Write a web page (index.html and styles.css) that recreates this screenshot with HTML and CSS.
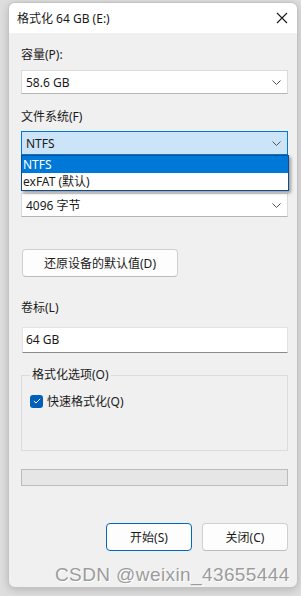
FILE: index.html
```html
<!DOCTYPE html>
<html lang="zh-CN">
<head>
    <meta charset="UTF-8">
    <title>格式化 64 GB (E:)</title>
    <link rel="stylesheet" href="styles.css">
</head>
<body>
    <div class="window">
        <div class="titlebar">
            <span class="title">格式化 64 GB (E:)</span>
            <svg class="close" width="12" height="12" viewBox="0 0 12 12"><path d="M1 1L11 11M11 1L1 11" stroke="#1a1a1a" stroke-width="1.1"/></svg>
        </div>
        <div class="content">
            <div class="label first">容量(P):</div>
            <div class="combo">
                <span>58.6 GB</span>
                <svg class="chev" width="9" height="5" viewBox="0 0 9 5"><path d="M0.5 0.5L4.5 4.5L8.5 0.5" fill="none" stroke="#555" stroke-width="1"/></svg>
            </div>

            <div class="label fs">文件系统(F)</div>
            <div class="dropwrap">
                <div class="combo focused">
                    <span>NTFS</span>
                    <svg class="chev" width="9" height="5" viewBox="0 0 9 5"><path d="M0.5 0.5L4.5 4.5L8.5 0.5" fill="none" stroke="#555" stroke-width="1"/></svg>
                </div>
                <ul class="droplist">
                    <li class="selected">NTFS</li>
                    <li>exFAT (默认)</li>
                </ul>
            </div>

            <div class="combo unit">
                <span>4096 字节</span>
                <svg class="chev" width="9" height="5" viewBox="0 0 9 5"><path d="M0.5 0.5L4.5 4.5L8.5 0.5" fill="none" stroke="#555" stroke-width="1"/></svg>
            </div>

            <button class="btn restore">还原设备的默认值(D)</button>

            <div class="label vol">卷标(L)</div>
            <div class="textbox">64 GB</div>

            <fieldset class="group">
                <legend>格式化选项(O)</legend>
                <label class="check">
                    <span class="box"><svg width="8" height="6" viewBox="0 0 8 6"><path d="M0.8 3L3 5L7.2 0.8" fill="none" stroke="#fff" stroke-width="1"/></svg></span>
                    快速格式化(Q)
                </label>
            </fieldset>

            <div class="progress"></div>

            <div class="actions">
                <button class="btn primary">开始(S)</button>
                <button class="btn">关闭(C)</button>
            </div>
        </div>
        <div class="watermark">CSDN @weixin_43655444</div>
    </div>
</body>
</html>
```

FILE: styles.css
```css
* {
    box-sizing: border-box;
    margin: 0;
    padding: 0;
}
body {
    width: 301px;
    height: 596px;
    background: #dedede;
    padding: 2px 0 0 8px;
    font-family: "Noto Sans", "Noto Sans CJK SC", sans-serif;
    font-size: 12px;
    color: #1a1a1a;
    overflow: hidden;
}
.window {
    position: relative;
    width: 290px;
    height: 586px;
    background: #f0f0f0;
    border: 1px solid #c4c4c4;
    border-radius: 7px;
    box-shadow: 0 2px 8px rgba(0, 0, 0, 0.18);
    overflow: hidden;
}
.titlebar {
    height: 30px;
    background: #fff;
    display: flex;
    align-items: center;
    justify-content: space-between;
    padding: 0 9px 0 8px;
}
.title {
    font-size: 12px;
}
.content {
    padding: 0 9px 0 12px;
}
.label {
    line-height: 16px;
    height: 16px;
}
.label.first { margin-top: 14px; }
.label.fs { margin-top: 15px; }
.label.vol { margin-top: 23px; }
.combo {
    height: 24px;
    background: #fff;
    border: 1px solid #dadada;
    border-bottom-color: #b5b5b5;
    display: flex;
    align-items: center;
    justify-content: space-between;
    padding: 0 6px 0 4px;
    margin-top: 7px;
}
.combo.focused {
    background: #cce4f7;
    border: 1px solid #0078d7;
    margin-top: 6px;
}
.combo.unit {
    margin-top: 38px;
}
.dropwrap {
    position: relative;
}
.droplist {
    position: absolute;
    left: 0;
    right: -1px;
    top: 24px;
    list-style: none;
    background: #fff;
    border: 1px solid #0b4d8f;
    box-shadow: 2px 2px 3px rgba(0, 0, 0, 0.35);
    z-index: 5;
}
.droplist li {
    height: 17px;
    line-height: 17px;
    padding-left: 1px;
}
.droplist li.selected {
    background: #0078d7;
    color: #fff;
}
.btn {
    font-family: inherit;
    font-size: 12px;
    color: #1a1a1a;
    background: #fdfdfd;
    border: 1px solid #d0d0d0;
    border-bottom-color: #bcbcbc;
    border-radius: 4px;
    height: 28px;
}
.btn.restore {
    margin-top: 32px;
    margin-left: 1px;
    width: 156px;
}
.textbox {
    margin-top: 11px;
    margin-left: 1px;
    height: 26px;
    background: #fff;
    border: 1px solid #e3e3e3;
    border-bottom-color: #8a8a8a;
    line-height: 24px;
    padding-left: 3px;
}
.group {
    margin-top: 15px;
    height: 83px;
    border: 1px solid #dcdcdc;
    padding: 0 8px;
}
.group legend {
    padding: 0 2px;
    margin-left: 0;
    line-height: 14px;
}
.check {
    display: flex;
    align-items: center;
    gap: 4px;
    margin-top: 10px;
}
.box {
    width: 13px;
    height: 13px;
    border-radius: 3px;
    background: #005fb8;
    display: flex;
    align-items: center;
    justify-content: center;
}
.progress {
    margin-top: 18px;
    height: 17px;
    background: #e6e6e6;
    border: 1px solid #bcbcbc;
}
.actions {
    margin-top: 37px;
    display: flex;
    justify-content: flex-end;
    gap: 10px;
}
.actions .btn {
    width: 86px;
}
.btn.primary {
    border: 1px solid #0067c0;
}
.watermark {
    position: absolute;
    left: 46px;
    top: 561px;
    white-space: nowrap;
    font-family: "Liberation Sans", Arial, sans-serif;
    font-size: 19px;
    color: #9c9c9c;
    text-shadow: 1px 1px 0 #fff;
    letter-spacing: 0.4px;
}
```
